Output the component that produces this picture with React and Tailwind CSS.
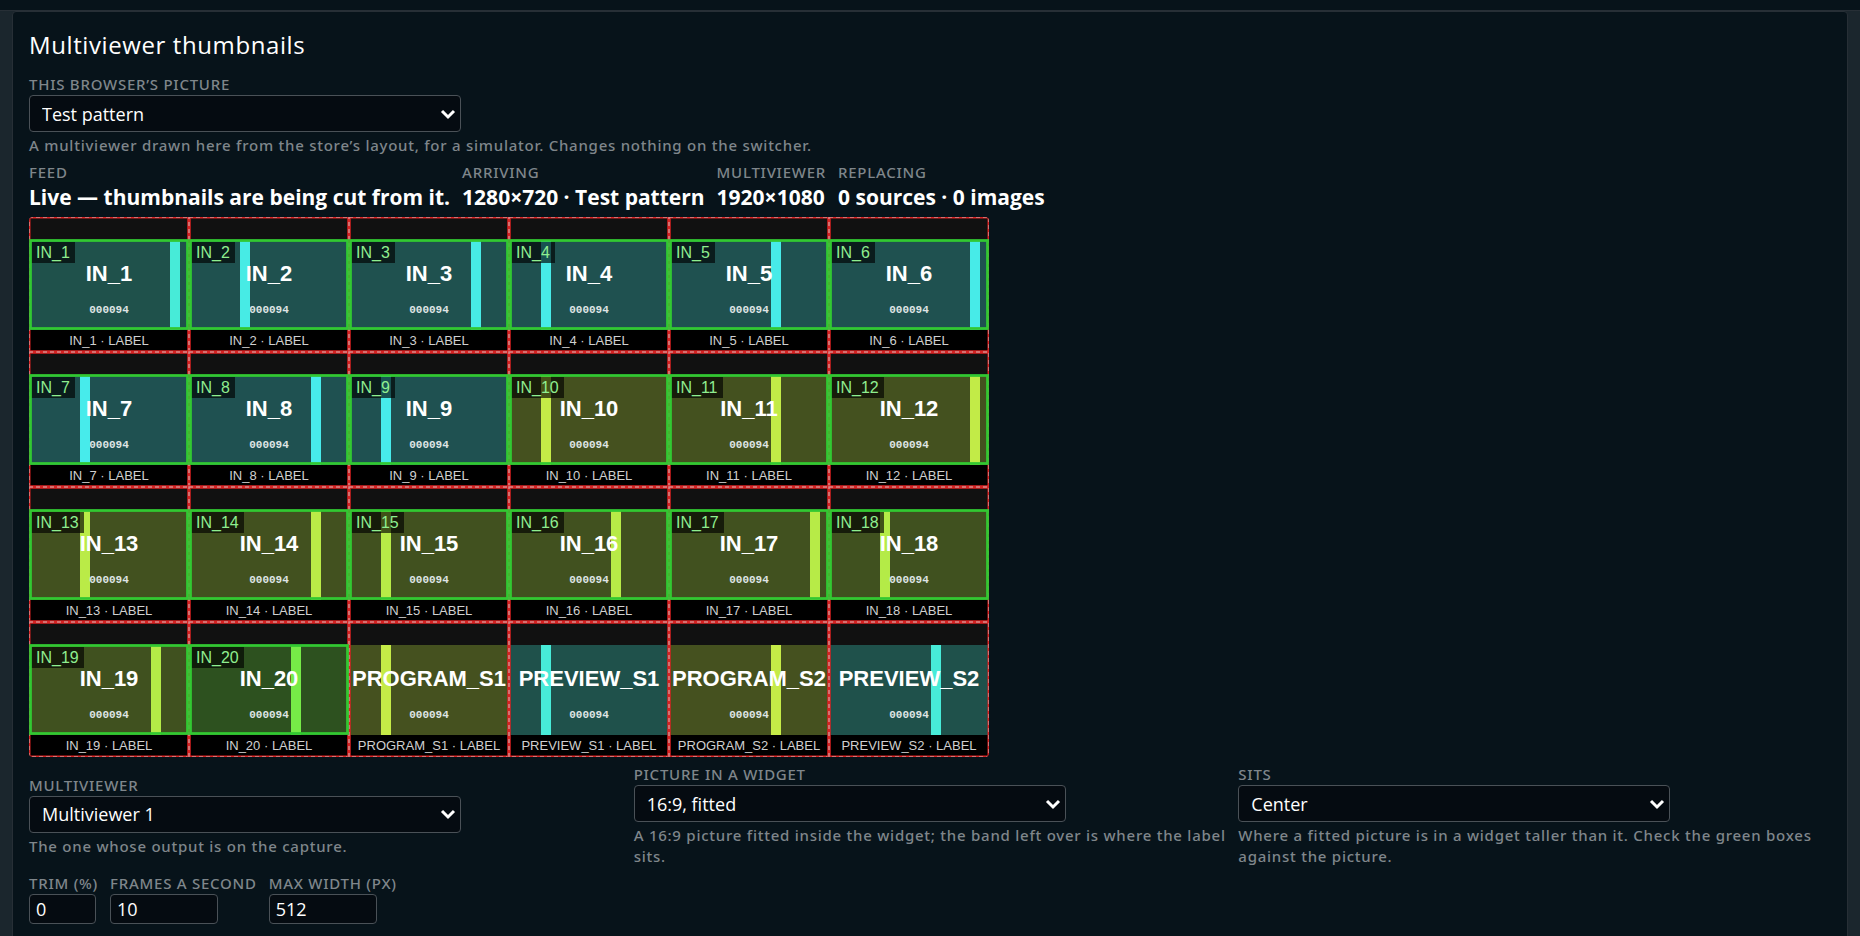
import React, { useId } from 'react';

const COLS = 6;
const CELL_W = 160;
const CELL_H = 135;

// at: left edge of the moving bar, as a percentage of the cell
const WIDGETS = [
  { name: 'IN_1', hue: 173, at: 88, source: true },
  { name: 'IN_2', hue: 178, at: 32, source: true },
  { name: 'IN_3', hue: 178, at: 76, source: true },
  { name: 'IN_4', hue: 179, at: 20, source: true },
  { name: 'IN_5', hue: 179, at: 64, source: true },
  { name: 'IN_6', hue: 179, at: 88, source: true },
  { name: 'IN_7', hue: 180, at: 32, source: true },
  { name: 'IN_8', hue: 180, at: 76, source: true },
  { name: 'IN_9', hue: 180, at: 20, source: true },
  { name: 'IN_10', hue: 74, at: 20, source: true },
  { name: 'IN_11', hue: 75, at: 64, source: true },
  { name: 'IN_12', hue: 75, at: 88, source: true },
  { name: 'IN_13', hue: 78, at: 32, source: true },
  { name: 'IN_14', hue: 78, at: 76, source: true },
  { name: 'IN_15', hue: 79, at: 20, source: true },
  { name: 'IN_16', hue: 79, at: 64, source: true },
  { name: 'IN_17', hue: 79, at: 88, source: true },
  { name: 'IN_18', hue: 80, at: 32, source: true },
  { name: 'IN_19', hue: 80, at: 76, source: true },
  { name: 'IN_20', hue: 103, at: 64, source: true },
  { name: 'PROGRAM_S1', hue: 74, at: 20 },
  { name: 'PREVIEW_S1', hue: 173, at: 20 },
  { name: 'PROGRAM_S2', hue: 74, at: 64 },
  { name: 'PREVIEW_S2', hue: 173, at: 64 },
];

const STATUS = [
  { label: 'Feed', value: 'Live — thumbnails are being cut from it.' },
  { label: 'Arriving', value: '1280×720 · Test pattern' },
  { label: 'Multiviewer', value: '1920×1080' },
  { label: 'Replacing', value: '0 sources · 0 images' },
];

const LABEL_CLASS =
  "block font-['Noto_Sans',sans-serif] text-[15px] leading-[22px] font-medium tracking-wider uppercase text-[#7f868b]";

function SelectField({ label, options, hint }) {
  const id = useId();

  return (
    <div>
      <label htmlFor={id} className={LABEL_CLASS}>
        {label}
      </label>
      <div className="relative w-full max-w-[432px]">
        <select
          id={id}
          className="block w-full h-[37px] pl-3 pr-8 appearance-none rounded border border-[#4a5157] bg-[#050b11] text-lg leading-6 text-white"
        >
          {options.map((option) => (
            <option key={option}>{option}</option>
          ))}
        </select>
        <svg
          viewBox="0 0 16 16"
          className="absolute right-[5px] top-1/2 -translate-y-1/2 w-4 h-4 pointer-events-none"
          fill="none"
          stroke="white"
          strokeWidth="3"
          aria-hidden="true"
        >
          <path d="m2 5 6 6 6-6" />
        </svg>
      </div>
      <p className="pt-[3px] font-['Noto_Sans',sans-serif] text-[15px] leading-[21px] font-medium tracking-wider text-[#7f868b]">
        {hint}
      </p>
    </div>
  );
}

function NumberField({ label, value, width }) {
  const id = useId();

  return (
    <div>
      <label htmlFor={id} className={LABEL_CLASS}>
        {label}
      </label>
      <input
        id={id}
        type="text"
        inputMode="numeric"
        defaultValue={value}
        className={`block ${width} h-[30px] px-1.5 rounded border border-[#4a5157] bg-[#050b11] text-lg leading-6 text-white`}
      />
    </div>
  );
}

function Widget({ widget }) {
  return (
    <div className="flex flex-col h-[135px] overflow-hidden bg-black">
      <div className="h-[23px] bg-[#111111]" />
      <div
        className="relative h-[90px] flex flex-col items-center pt-[22px]"
        style={{ backgroundColor: `hsl(${widget.hue} 44% 22%)` }}
      >
        <div
          className="absolute inset-y-0 w-[10px]"
          style={{ left: `${widget.at}%`, backgroundColor: `hsl(${widget.hue} 80% 60%)` }}
        />
        <span className="relative text-[22px] leading-6 font-bold text-white">{widget.name}</span>
        <span className="relative mt-4 font-['Liberation_Mono',monospace] text-[11px] leading-4 font-bold text-[#dfe5e5]">
          000094
        </span>
        {widget.source && (
          <span className="absolute left-[2px] top-[2px] px-[5px] bg-black/65 text-base leading-[21px] text-[#8fee8f]">
            {widget.name}
          </span>
        )}
      </div>
      <div className="text-center text-[13px] leading-[22px] text-[#d0d0d0]">{widget.name} · LABEL</div>
    </div>
  );
}

// Red: the whole widget. Green: the picture cut out of it.
function CutOverlay() {
  return (
    <svg viewBox="0 0 960 540" className="absolute inset-0 w-full h-full" fill="none" aria-hidden="true">
      {WIDGETS.map((widget, i) => {
        const x = (i % COLS) * CELL_W;
        const y = Math.floor(i / COLS) * CELL_H;
        return (
          <g key={widget.name}>
            <rect x={x} y={y} width={CELL_W} height={CELL_H} stroke="#d92323" strokeWidth="3" />
            <rect x={x} y={y} width={CELL_W} height={CELL_H} stroke="#d58c8c" strokeWidth="1.5" strokeDasharray="4 3" />
          </g>
        );
      })}
      {WIDGETS.map((widget, i) => {
        const x = (i % COLS) * CELL_W;
        const y = Math.floor(i / COLS) * CELL_H;
        return widget.source ? (
          <rect
            key={widget.name}
            x={x + 1.5}
            y={y + 23.5}
            width={CELL_W - 3}
            height="88"
            stroke="#32c832"
            strokeWidth="2.75"
          />
        ) : null;
      })}
    </svg>
  );
}

function TestPattern() {
  return (
    <div className="relative w-full max-w-[960px] overflow-hidden rounded font-['Liberation_Sans',Arial,sans-serif]">
      <div className="grid grid-cols-6">
        {WIDGETS.map((widget) => (
          <Widget key={widget.name} widget={widget} />
        ))}
      </div>
      <CutOverlay />
    </div>
  );
}

function App() {
  return (
    <div className="min-h-screen flex flex-col bg-[#1b262d] font-['Open_Sans',sans-serif]">
      <div className="h-[11px] bg-[#07131a] border-b border-[#272f36]" />
      <main className="flex-1 mx-3 px-4 pt-[17px] pb-3 rounded-t border border-[#272f36] bg-[#07131a]">
        <h2 className="text-2xl leading-8 tracking-wide text-white">Multiviewer thumbnails</h2>

        <div className="mt-3">
          <SelectField
            label="This browser’s picture"
            options={['Test pattern']}
            hint="A multiviewer drawn here from the store’s layout, for a simulator. Changes nothing on the switcher."
          />
        </div>

        <dl className="flex flex-wrap gap-x-3 mt-[5px]">
          {STATUS.map((item) => (
            <div key={item.label}>
              <dt className={LABEL_CLASS}>{item.label}</dt>
              <dd className="text-[21px] leading-7 font-bold text-white">{item.value}</dd>
            </div>
          ))}
        </dl>

        <div className="mt-1.5">
          <TestPattern />
        </div>

        <div className="grid grid-cols-3 items-center gap-3 mt-1.5">
          <SelectField
            label="Multiviewer"
            options={['Multiviewer 1']}
            hint="The one whose output is on the capture."
          />
          <SelectField
            label="Picture in a widget"
            options={['16:9, fitted']}
            hint="A 16:9 picture fitted inside the widget; the band left over is where the label sits."
          />
          <SelectField
            label="Sits"
            options={['Center']}
            hint="Where a fitted picture is in a widget taller than it. Check the green boxes against the picture."
          />
        </div>

        <div className="flex gap-3 mt-[5px]">
          <NumberField label="Trim (%)" value="0" width="w-[67px]" />
          <NumberField label="Frames a second" value="10" width="w-[108px]" />
          <NumberField label="Max width (px)" value="512" width="w-[108px]" />
        </div>
      </main>
    </div>
  );
}

export default App;
